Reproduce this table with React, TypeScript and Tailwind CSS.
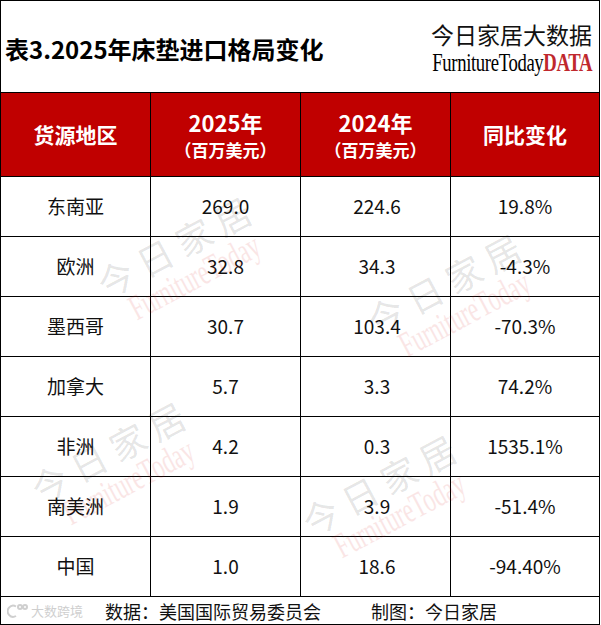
import React from "react";

type Row = { region: string; y2025: string; y2024: string; yoy: string };

const ROWS: Row[] = [
  { region: "东南亚", y2025: "269.0", y2024: "224.6", yoy: "19.8%" },
  { region: "欧洲", y2025: "32.8", y2024: "34.3", yoy: "-4.3%" },
  { region: "墨西哥", y2025: "30.7", y2024: "103.4", yoy: "-70.3%" },
  { region: "加拿大", y2025: "5.7", y2024: "3.3", yoy: "74.2%" },
  { region: "非洲", y2025: "4.2", y2024: "0.3", yoy: "1535.1%" },
  { region: "南美洲", y2025: "1.9", y2024: "3.9", yoy: "-51.4%" },
  { region: "中国", y2025: "1.0", y2024: "18.6", yoy: "-94.40%" },
];

// centre points of the faint "今日家居 / FurnitureToday" stamps
const MARKS = [
  { left: 184, top: 258 },
  { left: 454, top: 295 },
  { left: 118, top: 463 },
  { left: 389, top: 496 },
];

const cjk = "font-['Noto_Sans_CJK_SC','Noto_Sans',sans-serif]";

function Watermark({ left, top }: { left: number; top: number }) {
  return (
    <div
      className="pointer-events-none absolute flex -translate-x-1/2 -translate-y-1/2 rotate-[-28deg] flex-col items-center"
      style={{ left, top }}
    >
      <span className={`${cjk} whitespace-nowrap text-[36px] leading-[40px] tracking-[8px] text-black/[0.11]`}>
        今日家居
      </span>
      <span className="inline-block origin-center scale-x-[0.64] whitespace-nowrap font-['Liberation_Serif',serif] text-[36px] leading-[34px] text-[#d40000]/[0.10]">
        FurnitureToday
      </span>
    </div>
  );
}

function HeaderCell({ children, last }: { children: React.ReactNode; last?: boolean }) {
  return (
    <div
      className={`flex flex-col items-center justify-center border-b border-black ${
        last ? "" : "border-r"
      }`}
    >
      {children}
    </div>
  );
}

function BodyCell({ children, last }: { children: React.ReactNode; last?: boolean }) {
  return (
    <div
      className={`flex items-center justify-center border-b border-black text-[19px] text-[#111] ${
        last ? "" : "border-r"
      }`}
    >
      {children}
    </div>
  );
}

export default function App() {
  return (
    <div className={`${cjk} relative h-[625px] w-[600px] overflow-hidden border border-black bg-white`}>
      {/* title bar */}
      <div className="flex h-[92px] items-center justify-between border-b border-black pl-[4px] pr-[7px]">
        <h1 className="pt-[4px] text-[24px] font-bold leading-none text-black">表3.2025年床垫进口格局变化</h1>
        <div className="flex flex-col items-end">
          <span className="text-[23px] leading-[30px] text-[#111]">今日家居大数据</span>
          <span className="mt-[2px] inline-block origin-right scale-x-[0.72] whitespace-nowrap font-['Liberation_Serif',serif] text-[26px] leading-[24px] tracking-[-0.5px]">
            <span className="text-black">FurnitureToday</span>
            <span className="font-bold text-[#c0282d]">DATA</span>
          </span>
        </div>
      </div>

      {/* red column header */}
      <div className="grid h-[84px] grid-cols-[150px_150px_150px_1fr] bg-[#c00000] font-bold text-white">
        <HeaderCell>
          <span className="text-[21px]">货源地区</span>
        </HeaderCell>
        <HeaderCell>
          <span className="text-[22px] leading-[30px]">2025年</span>
          <span className="text-[17px] leading-[26px]">（百万美元）</span>
        </HeaderCell>
        <HeaderCell>
          <span className="text-[22px] leading-[30px]">2024年</span>
          <span className="text-[17px] leading-[26px]">（百万美元）</span>
        </HeaderCell>
        <HeaderCell last>
          <span className="text-[21px]">同比变化</span>
        </HeaderCell>
      </div>

      {/* data rows */}
      {ROWS.map((r) => (
        <div key={r.region} className="grid h-[60px] grid-cols-[150px_150px_150px_1fr]">
          <BodyCell>{r.region}</BodyCell>
          <BodyCell>{r.y2025}</BodyCell>
          <BodyCell>
            <span className="pl-[3px]">{r.y2024}</span>
          </BodyCell>
          <BodyCell last>{r.yoy}</BodyCell>
        </div>
      ))}

      {/* source line */}
      <div className="flex h-[27px] items-center text-[18px] leading-none text-[#111]">
        <div className="flex w-[104px] items-center gap-[2px] pl-[6px] text-[13px] text-[#cfcfcf]">
          <svg width="22" height="16" viewBox="0 0 22 16" fill="none" stroke="#cfcfcf" strokeWidth="2">
            <path d="M9 3.5A5.5 5.5 0 1 0 9 13" />
            <circle cx="13" cy="4" r="2" />
            <circle cx="18" cy="4" r="2" />
          </svg>
          <span>大数跨境</span>
        </div>
        <span>数据：美国国际贸易委员会</span>
        <span className="ml-[50px]">制图：今日家居</span>
      </div>

      {MARKS.map((m, i) => (
        <Watermark key={i} left={m.left} top={m.top} />
      ))}
    </div>
  );
}
